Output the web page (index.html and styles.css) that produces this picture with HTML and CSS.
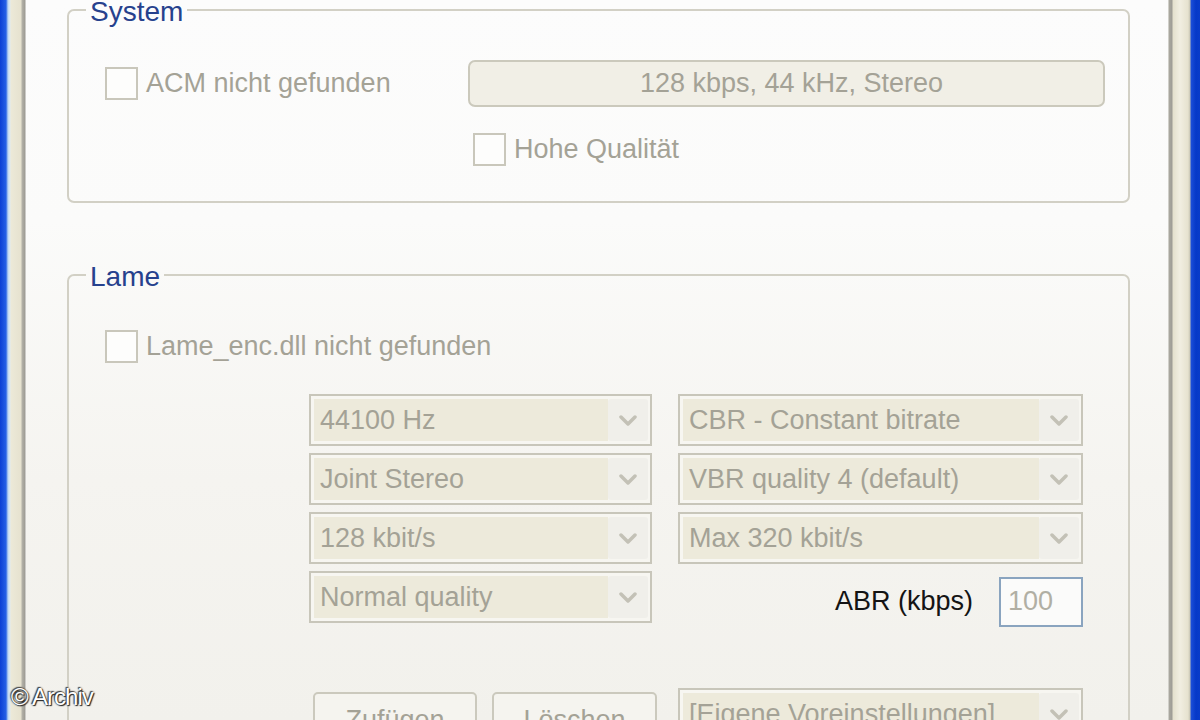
FILE: index.html
```html
<!DOCTYPE html>
<html lang="de">
<head>
<meta charset="utf-8">
<title>Encoder-Einstellungen</title>
<link rel="stylesheet" href="styles.css">
</head>
<body>
<div class="window">
  <div class="frame-left"></div>
  <div class="page">
    <fieldset class="group group-system">
      <legend>System</legend>
      <div class="sys-grid">
        <label class="check"><span class="box"></span>ACM nicht gefunden</label>
        <div class="field">128 kbps, 44 kHz, Stereo</div>
        <span></span>
        <label class="check check-hq"><span class="box"></span>Hohe Qualität</label>
      </div>
    </fieldset>

    <fieldset class="group group-lame">
      <legend>Lame</legend>
      <div class="lame-body">
        <label class="check"><span class="box"></span>Lame_enc.dll nicht gefunden</label>
        <div class="combo-grid">
          <div class="combo"><span class="combo-text">44100 Hz</span><span class="combo-btn"><svg width="18" height="11" viewBox="0 0 18 11"><polyline points="2,2 9,9 16,2"/></svg></span></div>
          <div class="combo"><span class="combo-text">CBR - Constant bitrate</span><span class="combo-btn"><svg width="18" height="11" viewBox="0 0 18 11"><polyline points="2,2 9,9 16,2"/></svg></span></div>
          <div class="combo"><span class="combo-text">Joint Stereo</span><span class="combo-btn"><svg width="18" height="11" viewBox="0 0 18 11"><polyline points="2,2 9,9 16,2"/></svg></span></div>
          <div class="combo"><span class="combo-text">VBR quality 4 (default)</span><span class="combo-btn"><svg width="18" height="11" viewBox="0 0 18 11"><polyline points="2,2 9,9 16,2"/></svg></span></div>
          <div class="combo"><span class="combo-text">128 kbit/s</span><span class="combo-btn"><svg width="18" height="11" viewBox="0 0 18 11"><polyline points="2,2 9,9 16,2"/></svg></span></div>
          <div class="combo"><span class="combo-text">Max 320 kbit/s</span><span class="combo-btn"><svg width="18" height="11" viewBox="0 0 18 11"><polyline points="2,2 9,9 16,2"/></svg></span></div>
          <div class="combo"><span class="combo-text">Normal quality</span><span class="combo-btn"><svg width="18" height="11" viewBox="0 0 18 11"><polyline points="2,2 9,9 16,2"/></svg></span></div>
          <div class="abr">
            <span class="abr-label">ABR (kbps)</span>
            <span class="abr-input">100</span>
          </div>
        </div>
        <div class="bottom-row">
          <span class="button btn-add">Zufügen</span>
          <span class="button btn-del">Löschen</span>
          <div class="combo combo-preset"><span class="combo-text">[Eigene Voreinstellungen]</span><span class="combo-btn"><svg width="18" height="11" viewBox="0 0 18 11"><polyline points="2,2 9,9 16,2"/></svg></span></div>
        </div>
      </div>
    </fieldset>
  </div>
  <div class="frame-right"></div>
  <div class="watermark">© Archiv</div>
</div>
</body>
</html>
```

FILE: styles.css
```css
* { box-sizing: border-box; }
html, body { margin: 0; padding: 0; }
body {
  width: 1200px;
  height: 720px;
  overflow: hidden;
  font-family: "Liberation Sans", Arial, sans-serif;
  font-size: 27px;
  color: #a4a296;
}
.window {
  position: relative;
  display: flex;
  width: 1200px;
  height: 720px;
  overflow: hidden;
}
.frame-left {
  width: 26px;
  flex: none;
  background: linear-gradient(to right,
    #0b3fd4 0, #2560e6 6px, #bcd6f2 8px, #dfeaf0 10px, #ece9d8 11px, #e6e2cf 21px,
    #b4b2a8 22px, #9d9b94 25px, #fafaf9 26px);
}
.frame-right {
  width: 32px;
  flex: none;
  background: linear-gradient(to right,
    #f6f6f3 0, #aaa89f 1px, #9e9c95 4px, #e4e0cd 5px, #f1eee1 12px, #e6e2cf 20px,
    #c9c6b5 22px, #1c4ed8 23px, #0638c8 28px, #0a3cc9 32px);
}
.page {
  flex: 1;
  padding: 0 38px 0 41px;
  background: linear-gradient(#fcfcfc 0, #fbfbfa 220px, #f5f4f0 480px, #f2f1ec 720px);
}

/* Group boxes */
.group {
  margin: 0;
  padding: 0;
  border: 2px solid #d2d0c5;
  border-radius: 7px;
  min-width: 0;
}
.group legend {
  margin-left: -19px;
  padding: 4px 4px 0;
  font-size: 28px;
  line-height: 26px;
  color: #26418d;
}
.group-system {
  margin-top: -5px;
  padding: 35px 23px 35px 36px;
}
.group-lame {
  margin-top: 57px;
  padding: 40px 23px 60px 36px;
}

.sys-grid {
  display: grid;
  grid-template-columns: 363px 1fr;
  row-gap: 26px;
  align-items: center;
}

/* Checkboxes */
.check {
  display: flex;
  align-items: center;
  gap: 8px;
  height: 33px;
  white-space: nowrap;
}
.box {
  width: 33px;
  height: 33px;
  flex: none;
  border: 2px solid #c9c7bb;
  background: #fdfdfc;
}
.check-hq { margin-left: 5px; }

.field {
  height: 47px;
  border: 2px solid #cbc9bc;
  border-radius: 7px;
  background: #f1efe6;
  display: flex;
  align-items: center;
  justify-content: center;
  padding-left: 10px;
  white-space: nowrap;
}

/* Combo boxes */
.combo-grid {
  display: grid;
  grid-template-columns: 343px 405px;
  grid-template-rows: repeat(4, 52px);
  column-gap: 26px;
  row-gap: 7px;
  margin: 31px 0 0 204px;
}
.combo {
  display: flex;
  height: 52px;
  border: 2px solid #c8c6ba;
  background: #f7f6f1;
  padding: 3px 2px 3px 3px;
}
.combo-text {
  flex: 1;
  display: flex;
  align-items: center;
  padding-left: 6px;
  background: #edeadb;
  white-space: nowrap;
  overflow: hidden;
}
.combo-btn {
  width: 40px;
  flex: none;
  display: flex;
  align-items: center;
  justify-content: center;
  background: #f0efea;
  border-radius: 3px;
}
.combo-btn svg polyline {
  fill: none;
  stroke: #c3c1b6;
  stroke-width: 3.5;
  stroke-linecap: round;
  stroke-linejoin: round;
}

/* ABR */
.abr {
  display: flex;
  align-items: center;
  justify-content: flex-end;
  gap: 26px;
  padding-top: 9px;
}
.abr-label {
  color: #141414;
  white-space: nowrap;
}
.abr-input {
  width: 84px;
  height: 50px;
  border: 2px solid #8aa4bf;
  background: #fbfbfa;
  color: #b1afa4;
  display: flex;
  align-items: center;
  padding-left: 7px;
}

/* Bottom row */
.bottom-row {
  display: flex;
  align-items: flex-start;
  margin: 65px 0 0 208px;
}
.button {
  margin-top: 4px;
  height: 50px;
  border: 2px solid #cbc9bd;
  border-radius: 5px;
  background: #f5f4ef;
  display: flex;
  align-items: center;
  justify-content: center;
  padding-top: 6px;
  white-space: nowrap;
}
.btn-add { width: 164px; }
.btn-del { width: 165px; margin-left: 15px; }
.combo-preset { width: 405px; margin-left: 21px; }

/* Watermark overlay */
.watermark {
  position: absolute;
  left: 11px;
  top: 683px;
  font-family: "Liberation Sans", Arial, sans-serif;
  font-size: 24px;
  color: #ffffff;
  letter-spacing: -1px;
  text-shadow: 0 0 2px #222, 1px 1px 1px #222, -1px -1px 1px #444;
}
```
